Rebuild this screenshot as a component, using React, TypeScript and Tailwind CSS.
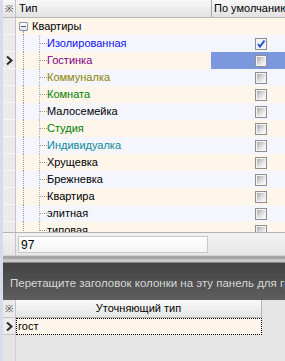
import React from "react"

type Row = { name: string; color: string; checked?: boolean; selected?: boolean; root?: boolean }

const rows: Row[] = [
  { name: "Квартиры", color: "#000000", root: true },
  { name: "Изолированная", color: "#1010f0", checked: true },
  { name: "Гостинка", color: "#800080", selected: true },
  { name: "Коммуналка", color: "#8c8200" },
  { name: "Комната", color: "#008000" },
  { name: "Малосемейка", color: "#000000" },
  { name: "Студия", color: "#008000" },
  { name: "Индивидуалка", color: "#0e8a98" },
  { name: "Хрущевка", color: "#000000" },
  { name: "Брежневка", color: "#000000" },
  { name: "Квартира", color: "#000000" },
  { name: "элитная", color: "#000000" },
  { name: "типовая", color: "#000000" },
]

function Arrow() {
  return (
    <svg width="7" height="9" viewBox="0 0 7 9" className="block">
      <path d="M1 0.5 L5.5 4.5 L1 8.5" fill="none" stroke="#2b2b2b" strokeWidth="2" />
    </svg>
  )
}

function Checkbox({ checked }: { checked?: boolean }) {
  return (
    <div className="w-[12px] h-[12px] border border-[#8e8e8e] bg-[#f4f4f4] p-px">
      <div className="w-full h-full bg-gradient-to-br from-[#a8a8a8] via-[#dcdcdc] to-[#ffffff] relative">
        {checked && (
          <div className="absolute inset-0 bg-[#eef2fb]">
            <svg width="10" height="10" viewBox="0 0 10 10" className="absolute -left-px -top-px">
              <path d="M2 5 L4 7.5 L8.5 1.5" fill="none" stroke="#2456c8" strokeWidth="2" />
            </svg>
          </div>
        )}
      </div>
    </div>
  )
}

function Star() {
  return <span className="text-[10px] leading-none text-[#404040]">※</span>
}

export default function App() {
  return (
    <div className="w-[285px] h-[361px] overflow-hidden flex flex-col bg-[#e5e5e5] border-l-[3px] border-[#d6dce8] font-['Liberation_Sans',Arial,sans-serif] text-[11px] text-black">
      {/* Top tree grid */}
      <div className="h-[232px] overflow-hidden flex flex-col bg-[#f4f5fd]">
        <div className="h-[18px] shrink-0 flex border-b border-[#b8b8b8] bg-gradient-to-b from-[#f8f8f8] to-[#e2e2e2]">
          <div className="w-[13px] shrink-0 border-r border-[#c4c4c4] flex items-center justify-center">
            <Star />
          </div>
          <div className="w-[195px] shrink-0 pl-[3px] flex items-center">Тип</div>
          <div className="flex-1 border-l border-[#a8a8a8] pl-[2px] flex items-center whitespace-nowrap overflow-hidden">
            По умолчанию
          </div>
        </div>
        {rows.map((r, i) => (
          <div
            key={r.name}
            className={`h-[17px] shrink-0 flex ${i % 2 === 0 ? "bg-[#fef6eb]" : "bg-[#f4f5fd]"}`}
          >
            <div className="w-[13px] shrink-0 border-r border-[#c4c4c4] bg-[#ebebeb] border-b border-b-[#f6f6f6] flex items-center justify-center">
              {r.selected && <Arrow />}
            </div>
            <div className="w-[195px] shrink-0 relative flex items-center">
              {r.root ? (
                <>
                  <div className="ml-[3px] w-[9px] h-[9px] rounded-[1px] border border-[#8494ad] bg-gradient-to-b from-white to-[#dfe4ec] flex items-center justify-center">
                    <div className="w-[5px] h-px bg-[#4a5568]" />
                  </div>
                  <div className="absolute left-[7px] top-[13px] bottom-0 border-l border-dotted border-[#9a9a9a]" />
                  <span className="ml-[4px]">{r.name}</span>
                </>
              ) : (
                <>
                  <div className="absolute left-[7px] top-0 bottom-0 border-l border-dotted border-[#9a9a9a]" />
                  <div className="absolute left-[23px] top-0 bottom-0 border-l border-dotted border-[#b0b0b0]" />
                  <div className="absolute left-[23px] top-[8px] w-[8px] border-t border-dotted border-[#9a9a9a]" />
                  <span className="ml-[31px]" style={{ color: r.color }}>
                    {r.name}
                  </span>
                </>
              )}
            </div>
            <div className={`flex-1 flex items-center pl-[44px] ${r.selected ? "bg-[#7b97dd]" : ""}`}>
              {!r.root && <Checkbox checked={r.checked} />}
            </div>
          </div>
        ))}
      </div>

      {/* Footer */}
      <div className="h-[23px] shrink-0 flex border-t border-[#b4b4b4] bg-gradient-to-b from-[#f2f2f2] to-[#e6e6e6]">
        <div className="w-[13px] shrink-0 border-r border-[#c4c4c4]" />
        <div className="pt-[3px] pl-[2px]">
          <div className="w-[190px] h-[17px] border border-[#c8c8c8] bg-gradient-to-b from-white to-[#f4f4f4] pl-[2px] flex items-center text-[12px]">
            97
          </div>
        </div>
      </div>

      {/* Splitter */}
      <div className="h-[8px] shrink-0 flex flex-col">
        <div className="h-[1px] bg-[#d2d2d2]" />
        <div className="h-[3px] bg-[#a4a4a4]" />
        <div className="h-[3px] bg-[#c6c6c6]" />
        <div className="h-[1px] bg-[#8a8a8a]" />
      </div>

      {/* Group panel */}
      <div className="h-[37px] shrink-0 bg-gradient-to-b from-[#434343] to-[#5e5e5e] text-[#d8d8d8] text-[11.5px] pl-[7px] pt-[12px] whitespace-nowrap overflow-hidden">
        Перетащите заголовок колонки на эту панель для группировки по этой колонке
      </div>

      {/* Detail grid */}
      <div className="flex-1 flex flex-col">
        <div className="h-[18px] shrink-0 flex">
          <div className="w-[13px] shrink-0 border-r border-b border-[#c4c4c4] bg-[#ebebeb] flex items-center justify-center">
            <Star />
          </div>
          <div className="w-[246px] shrink-0 border-r border-b border-[#b8b8b8] bg-gradient-to-b from-[#fafafa] to-[#e4e4e4] flex items-center justify-center">
            Уточняющий тип
          </div>
        </div>
        <div className="h-[17px] shrink-0 flex">
          <div className="w-[13px] shrink-0 border-r border-b border-[#c4c4c4] bg-[#ebebeb] flex items-center justify-center">
            <Arrow />
          </div>
          <div className="w-[246px] shrink-0 bg-[#fef6eb] border border-dotted border-black pl-[1px] flex items-center">
            гост
          </div>
        </div>
        <div className="flex-1 flex">
          <div className="w-[13px] shrink-0 border-r border-[#d0d0d0]" />
        </div>
      </div>
    </div>
  )
}
